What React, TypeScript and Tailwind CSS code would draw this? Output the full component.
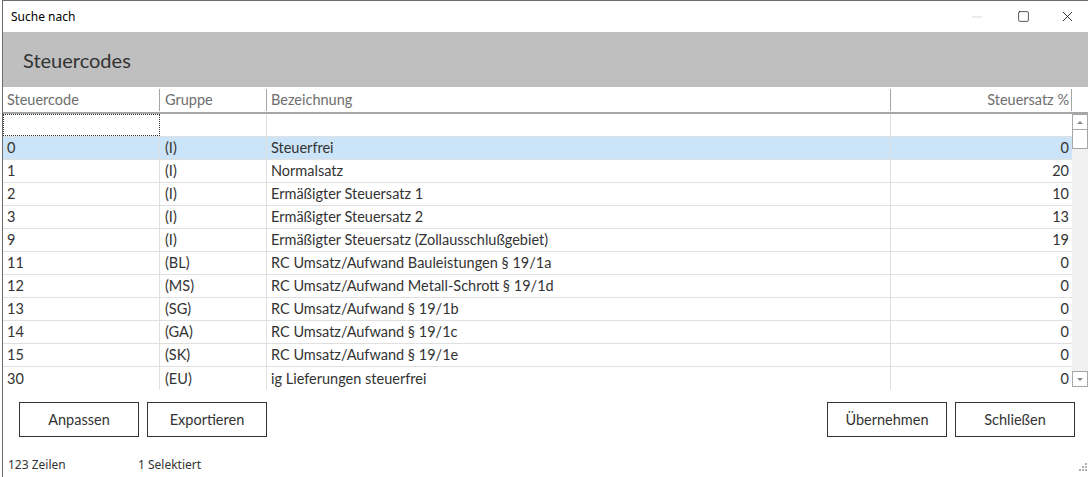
import { Minus, Square, X } from 'lucide-react';

const rows = [
  { code: '0', group: '(I)', name: 'Steuerfrei', rate: '0' },
  { code: '1', group: '(I)', name: 'Normalsatz', rate: '20' },
  { code: '2', group: '(I)', name: 'Ermäßigter Steuersatz 1', rate: '10' },
  { code: '3', group: '(I)', name: 'Ermäßigter Steuersatz 2', rate: '13' },
  { code: '9', group: '(I)', name: 'Ermäßigter Steuersatz (Zollausschlußgebiet)', rate: '19' },
  { code: '11', group: '(BL)', name: 'RC Umsatz/Aufwand Bauleistungen § 19/1a', rate: '0' },
  { code: '12', group: '(MS)', name: 'RC Umsatz/Aufwand Metall-Schrott § 19/1d', rate: '0' },
  { code: '13', group: '(SG)', name: 'RC Umsatz/Aufwand § 19/1b', rate: '0' },
  { code: '14', group: '(GA)', name: 'RC Umsatz/Aufwand § 19/1c', rate: '0' },
  { code: '15', group: '(SK)', name: 'RC Umsatz/Aufwand § 19/1e', rate: '0' },
  { code: '30', group: '(EU)', name: 'ig Lieferungen steuerfrei', rate: '0' },
];

const cols = 'grid grid-cols-[157px_107px_624px_181px]';

function Button({ label }: { label: string }) {
  return (
    <button className="w-[120px] h-[35px] border border-[#333] bg-white text-[14.5px] text-[#333]">
      {label}
    </button>
  );
}

export default function App() {
  return (
    <div className="w-[1088px] h-[477px] overflow-hidden bg-white font-['Lato','Noto_Sans',sans-serif] text-[#333]">
      <div className="ml-[2px] h-full border-l border-t border-[#6b6b6b] flex flex-col">
        {/* title bar */}
        <div className="h-[31px] flex items-center justify-between pl-[8px]">
          <span className="text-[12px] text-black font-['Noto_Sans',sans-serif]">Suche nach</span>
          <div className="flex items-center">
            <div className="w-[46px] flex justify-center text-[#c8c8c8]">
              <Minus size={16} strokeWidth={1} />
            </div>
            <div className="w-[46px] flex justify-center text-black">
              <Square size={13} strokeWidth={1.2} />
            </div>
            <div className="w-[42px] flex justify-center text-black">
              <X size={17} strokeWidth={1.1} />
            </div>
          </div>
        </div>

        {/* header */}
        <div className="h-[55px] bg-[#bfbfbf] flex items-center pl-[20px]">
          <h1 className="text-[20px] text-[#333]">Steuercodes</h1>
        </div>

        {/* grid */}
        <div className="flex flex-col">
          <div className={`${cols} h-[27px] border-b-2 border-[#a6a6a6] text-[14.5px] text-[#6e6e6e]`}>
            <div className="flex items-center pl-[4px] border-r border-[#a6a6a6] my-[2px]">Steuercode</div>
            <div className="flex items-center pl-[5px] border-r border-[#a6a6a6] my-[2px]">Gruppe</div>
            <div className="flex items-center pl-[4px] border-r border-[#a6a6a6] my-[2px]">Bezeichnung</div>
            <div className="flex items-center justify-end pr-[2px] border-r border-[#a6a6a6] my-[2px]">Steuersatz %</div>
          </div>
          <div className="flex">
            <div className="flex flex-col">
              <div className={`${cols} h-[23px] border-b border-[#e0e0e0]`}>
                <div className="border border-dotted border-[#333]" />
                <div className="border-r border-[#e0e0e0]" />
                <div className="border-r border-[#e0e0e0]" />
                <div />
              </div>
              {rows.map((r, i) => (
                <div
                  key={r.code}
                  className={`${cols} h-[23px] text-[14.5px] ${i === 0 ? 'bg-[#cce4f7]' : ''} ${i < rows.length - 1 ? 'border-b border-[#e0e0e0]' : ''}`}
                >
                  <div className="flex items-center pl-[4px] border-r border-[#e0e0e0]">{r.code}</div>
                  <div className="flex items-center pl-[5px] border-r border-[#e0e0e0]">{r.group}</div>
                  <div className="flex items-center pl-[4px] border-r border-[#e0e0e0]">{r.name}</div>
                  <div className="flex items-center justify-end pr-[3px]">{r.rate}</div>
                </div>
              ))}
            </div>
            {/* scrollbar */}
            <div className="w-[16px] h-[273px] bg-[#f0f0f0] flex flex-col justify-between">
              <div className="flex flex-col">
                <div className="h-[16px] border border-[#a6a6a6] bg-white flex items-center justify-center">
                  <div className="w-0 h-0 border-l-[3px] border-r-[3px] border-b-[3px] border-l-transparent border-r-transparent border-b-[#888]" />
                </div>
                <div className="h-[19px] border border-t-0 border-[#a6a6a6] bg-white" />
              </div>
              <div className="h-[16px] border border-[#a6a6a6] bg-white flex items-center justify-center">
                <div className="w-0 h-0 border-l-[3px] border-r-[3px] border-t-[3px] border-l-transparent border-r-transparent border-t-[#888]" />
              </div>
            </div>
          </div>
        </div>

        {/* buttons */}
        <div className="flex justify-between pl-[16px] pr-[13px] mt-[12px]">
          <div className="flex gap-[8px]">
            <Button label="Anpassen" />
            <Button label="Exportieren" />
          </div>
          <div className="flex gap-[8px]">
            <Button label="Übernehmen" />
            <Button label="Schließen" />
          </div>
        </div>

        {/* status */}
        <div className="flex items-end justify-between mt-[19px] pl-[5px]">
          <div className="flex text-[12px] text-[#333] font-['Noto_Sans',sans-serif]">
            <span className="w-[130px]">123 Zeilen</span>
            <span>1 Selektiert</span>
          </div>
          <svg width="10" height="10" viewBox="0 0 10 10" className="mb-[3px] mr-[1px]">
            {[
              [8, 0], [8, 3], [5, 3], [8, 6], [5, 6], [2, 6],
            ].map(([x, y]) => (
              <rect key={`${x}-${y}`} x={x} y={y + 2} width="2" height="2" fill="#b0b0b0" />
            ))}
          </svg>
        </div>
      </div>
    </div>
  );
}
